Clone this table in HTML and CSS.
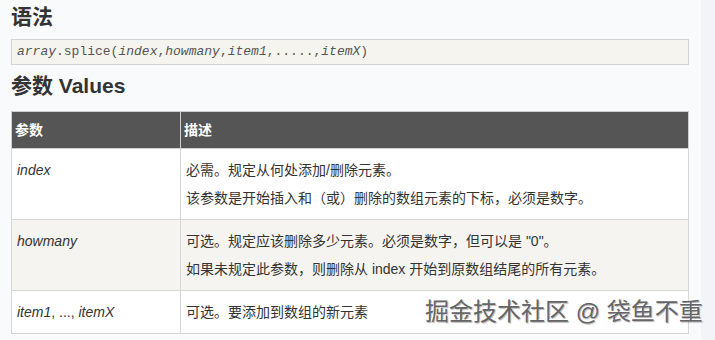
FILE: index.html
```html
<!DOCTYPE html>
<html lang="zh-CN">
<head>
<meta charset="utf-8" />
<title>array.splice 语法</title>
<link rel="stylesheet" href="styles.css">
</head>
<body>
	<div class="page">
		<div class="main">
			<h2>语法</h2>
			<pre class="code"><i>array</i>.splice(<i>index</i>,<i>howmany</i>,<i>item1</i>,.....,<i>itemX</i>)</pre>

			<h2 class="second">参数 Values</h2>
			<table class="dataintable">
				<tr>
					<th class="col1">参数</th>
					<th>描述</th>
				</tr>
				<tr>
					<td><i>index</i></td>
					<td>
						<p>必需。规定从何处添加/删除元素。</p>
						<p>该参数是开始插入和（或）删除的数组元素的下标，必须是数字。</p>
					</td>
				</tr>
				<tr class="odd">
					<td><i>howmany</i></td>
					<td>
						<p>可选。规定应该删除多少元素。必须是数字，但可以是 "0"。</p>
						<p>如果未规定此参数，则删除从 index 开始到原数组结尾的所有元素。</p>
					</td>
				</tr>
				<tr>
					<td><i>item1</i>, ..., <i>itemX</i></td>
					<td>
						<p>可选。要添加到数组的新元素</p>
					</td>
				</tr>
			</table>
		</div>
		<div class="side"></div>
	</div>
	<div class="mark">掘金技术社区 @ 袋鱼不重</div>
</body>
</html>
```

FILE: styles.css
```css
*{ padding:0; margin:0; box-sizing:border-box;}
body{ background:#f9fafc; font-family:"Liberation Sans","Noto Sans CJK SC",sans-serif; color:#333; width:715px; height:340px; overflow:hidden; position:relative;}
.page{ display:flex; height:340px;}
.main{ width:701px; padding:5px 12px 0 11px;}
.side{ flex:1; background:#f3f4f8;}

h2{ font-size:21px; line-height:24px; font-weight:bold; color:#333;}
h2.second{ margin-top:9px;}

.code{ margin-top:10px; height:26px; background:#f5f4ef; border:1px solid #d3d3d3; padding:4px 5px; font-family:"Liberation Mono",monospace; font-size:13px; line-height:16px; color:#555;}

.dataintable{ margin-top:13px; width:678px; border-collapse:collapse; font-size:14px;}
.dataintable th{ background:#555; color:#fff; font-weight:bold; text-align:left; font-size:14px; line-height:18px; padding:9px 3px; border:1px solid #cfcfcf;}
.dataintable th.col1{ width:169px;}
.dataintable td{ background:#fff; vertical-align:top; line-height:18px; padding:12px 5px; border:1px solid #d6d6d6; color:#333;}
.dataintable tr.odd td{ background:#f5f4f0;}
.dataintable td p + p{ margin-top:10px;}

.mark{ position:absolute; left:425px; top:297px; font-size:24px; line-height:30px; color:#666; white-space:nowrap; text-shadow:-1px -1px 0 #fff, 1px 1px 1px rgba(0,0,0,.3);}
```
